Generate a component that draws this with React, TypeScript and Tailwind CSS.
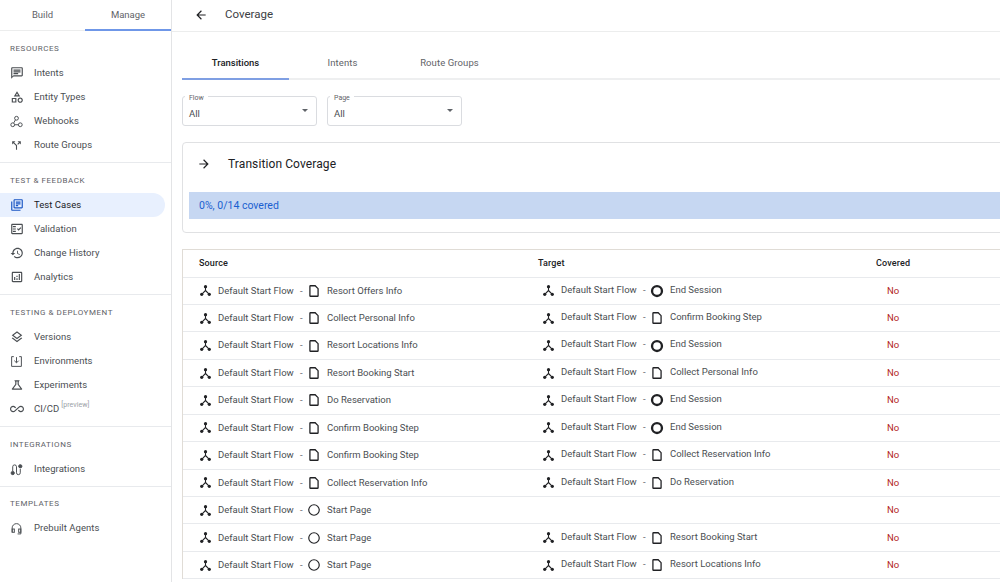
const paths = {
  intents: 'M20 2H4c-1.1 0-2 .9-2 2v18l4-4h14c1.1 0 2-.9 2-2V4c0-1.1-.9-2-2-2zm0 14H6l-2 2V4h16v12zM6 12h8v2H6zm0-3h12v2H6zm0-3h12v2H6z',
  entity: 'M12 2l-5.5 9h11L12 2zm0 3.84L13.93 9h-3.87L12 5.84zM17.5 13c-2.49 0-4.5 2.01-4.5 4.5s2.01 4.5 4.5 4.5 4.5-2.01 4.5-4.5-2.01-4.5-4.5-4.5zm0 7c-1.38 0-2.5-1.12-2.5-2.5s1.12-2.5 2.5-2.5 2.5 1.12 2.5 2.5-1.12 2.5-2.5 2.5zM3 21.5h8v-8H3v8zm2-6h4v4H5v-4z',
  route: 'M14 4l2.29 2.29-2.88 2.88 1.42 1.42 2.88-2.88L20 10V4zm-4 0H4v6l2.29-2.29 4.71 4.7V20h2v-8.41l-5.29-5.3z',
  tests: 'M4 6H2v14c0 1.1.9 2 2 2h14v-2H4V6zm16-4H8c-1.1 0-2 .9-2 2v12c0 1.1.9 2 2 2h12c1.1 0 2-.9 2-2V4c0-1.1-.9-2-2-2zm0 14H8V4h12v12zM10 9h8v2h-8zm0 3h4v2h-4zm0-6h8v2h-8z',
  validation: 'M20 3H4c-1.1 0-2 .9-2 2v14c0 1.1.9 2 2 2h16c1.1 0 2-.9 2-2V5c0-1.1-.9-2-2-2zm0 16H4V5h16v14zM19.41 10.42L17.99 9l-3.17 3.17-1.41-1.42L12 12.16 14.82 15zM5 7h5v2H5zM5 11h5v2H5zM5 15h5v2H5z',
  history: 'M13 3c-4.97 0-9 4.03-9 9H1l3.89 3.89.07.14L9 12H6c0-3.87 3.13-7 7-7s7 3.13 7 7-3.13 7-7 7c-1.93 0-3.68-.79-4.94-2.06l-1.42 1.42C8.27 19.99 10.51 21 13 21c4.97 0 9-4.03 9-9s-4.03-9-9-9zm-1 5v5l4.28 2.54.72-1.21-3.5-2.08V8H12z',
  analytics: 'M19 3H5c-1.1 0-2 .9-2 2v14c0 1.1.9 2 2 2h14c1.1 0 2-.9 2-2V5c0-1.1-.9-2-2-2zm0 16H5V5h14v14zM7 12h2v5H7zM15 7h2v10h-2zM11 14h2v3h-2zM11 10h2v2h-2z',
  versions: 'M11.99 18.54l-7.37-5.73L3 14.07l9 7 9-7-1.63-1.27-7.38 5.74zM12 16l7.36-5.73L21 9l-9-7-9 7 1.63 1.27L12 16zm0-11.47L17.74 9 12 13.47 6.26 9 12 4.53z',
  science: 'M13 11.33L18 18H6l5-6.67V6h2m2.96-2H8.04c-.42 0-.65.48-.39.81L9 6.5v4.17L3.2 18.4c-.49.66-.02 1.6.8 1.6h16c.82 0 1.29-.94.8-1.6L15 10.67V6.5l1.35-1.69c.26-.33.03-.81-.39-.81z',
  infinity: 'M18.6 6.62c-1.44 0-2.8.56-3.77 1.53L12 10.66 10.48 12h.01L7.8 14.39c-.64.64-1.49.99-2.4.99-1.87 0-3.39-1.51-3.39-3.38S3.53 8.62 5.4 8.62c.91 0 1.76.35 2.44 1.03l1.13 1 1.51-1.34L9.22 8.2C8.2 7.18 6.84 6.62 5.4 6.62 2.42 6.62 0 9.04 0 12s2.42 5.38 5.4 5.38c1.44 0 2.8-.56 3.77-1.53l2.83-2.5.01.01L13.52 12h-.01l2.69-2.39c.64-.64 1.49-.99 2.4-.99 1.87 0 3.39 1.51 3.39 3.38s-1.52 3.38-3.39 3.38c-.9 0-1.76-.35-2.44-1.03l-1.14-1.01-1.51 1.34 1.27 1.12c1.02 1.01 2.37 1.57 3.82 1.57 2.98 0 5.4-2.41 5.4-5.38s-2.42-5.37-5.4-5.37z',
  back: 'M20 11H7.83l5.59-5.59L12 4l-8 8 8 8 1.41-1.41L7.83 13H20v-2z',
  forward: 'M4 11h12.17l-5.59-5.59L12 4l8 8-8 8-1.41-1.41L16.17 13H4v-2z',
}

function Icon({ d, className }: { d: string; className?: string }) {
  return (
    <svg viewBox="0 0 24 24" fill="currentColor" className={className}>
      <path d={d} />
    </svg>
  )
}

function WebhookIcon({ className }: { className?: string }) {
  return (
    <svg viewBox="0 0 24 24" fill="none" stroke="currentColor" strokeWidth="1.8" className={className}>
      <circle cx="12" cy="6" r="3.5" />
      <circle cx="5" cy="18" r="3.5" />
      <circle cx="19" cy="18" r="3.5" />
      <path d="M10 9l-3 5.5M8.5 18h7" />
    </svg>
  )
}

function InboxIcon({ className }: { className?: string }) {
  return (
    <svg viewBox="0 0 24 24" fill="none" stroke="currentColor" strokeWidth="1.8" className={className}>
      <path d="M7 3H3v18h18V3h-4" />
      <path d="M12 4v10M8 10.5l4 4 4-4" />
    </svg>
  )
}

function IntegrationsIcon({ className }: { className?: string }) {
  return (
    <svg viewBox="0 0 24 24" fill="none" stroke="currentColor" strokeWidth="1.8" className={className}>
      <path d="M5 15V7a3.5 3.5 0 0 1 7 0v11a3 3 0 0 0 7 0V11" />
      <circle cx="5" cy="18.5" r="3" fill="currentColor" />
      <circle cx="19" cy="6" r="3" fill="currentColor" />
    </svg>
  )
}

function HeadsetIcon({ className }: { className?: string }) {
  return (
    <svg viewBox="0 0 24 24" fill="none" stroke="currentColor" strokeWidth="1.8" className={className}>
      <path d="M4 19v-8a8 8 0 0 1 16 0v8" />
      <rect x="4" y="13" width="4" height="6" />
      <rect x="16" y="13" width="4" height="6" />
      <path d="M20 19v3h-6" />
    </svg>
  )
}

function FlowIcon() {
  return (
    <svg viewBox="0 0 24 24" fill="none" className="size-[13px] shrink-0 text-[#202124]">
      <path d="M12 6v6L5 19M12 12l7 7" stroke="currentColor" strokeWidth="2" />
      <circle cx="12" cy="5" r="3" fill="currentColor" />
      <circle cx="5" cy="19" r="3" fill="currentColor" />
      <circle cx="19" cy="19" r="3" fill="currentColor" />
    </svg>
  )
}

function PageIcon() {
  return (
    <svg viewBox="0 0 24 24" fill="none" stroke="currentColor" strokeWidth="2.2" className="size-[14px] shrink-0 text-[#202124]">
      <path d="M14 3H6a1 1 0 0 0-1 1v16a1 1 0 0 0 1 1h12a1 1 0 0 0 1-1V8z" />
    </svg>
  )
}

function NodeIcon({ kind }: { kind: 'page' | 'start' | 'end' }) {
  if (kind === 'page') return <PageIcon />
  return (
    <svg viewBox="0 0 24 24" fill="none" stroke="currentColor" strokeWidth={kind === 'end' ? 4 : 2} className="size-[14px] shrink-0 text-[#202124]">
      <circle cx="12" cy="12" r={kind === 'end' ? 8.5 : 9} />
    </svg>
  )
}

const sections = [
  {
    title: 'Resources',
    items: [
      { label: 'Intents', icon: <Icon d={paths.intents} className="size-[14px]" /> },
      { label: 'Entity Types', icon: <Icon d={paths.entity} className="size-[14px]" /> },
      { label: 'Webhooks', icon: <WebhookIcon className="size-[13px]" /> },
      { label: 'Route Groups', icon: <Icon d={paths.route} className="size-[13px]" /> },
    ],
  },
  {
    title: 'Test & Feedback',
    items: [
      { label: 'Test Cases', active: true, icon: <Icon d={paths.tests} className="size-[14px]" /> },
      { label: 'Validation', icon: <Icon d={paths.validation} className="size-[14px]" /> },
      { label: 'Change History', icon: <Icon d={paths.history} className="size-[14px]" /> },
      { label: 'Analytics', icon: <Icon d={paths.analytics} className="size-[14px]" /> },
    ],
  },
  {
    title: 'Testing & Deployment',
    items: [
      { label: 'Versions', icon: <Icon d={paths.versions} className="size-[14px]" /> },
      { label: 'Environments', icon: <InboxIcon className="size-[13px]" /> },
      { label: 'Experiments', icon: <Icon d={paths.science} className="size-[14px]" /> },
      { label: 'CI/CD', preview: true, icon: <Icon d={paths.infinity} className="size-[14px]" /> },
    ],
  },
  {
    title: 'Integrations',
    items: [{ label: 'Integrations', icon: <IntegrationsIcon className="size-[13px]" /> }],
  },
  {
    title: 'Templates',
    items: [{ label: 'Prebuilt Agents', icon: <HeadsetIcon className="size-[13px]" /> }],
  },
]

type Node = { name: string; kind: 'page' | 'start' | 'end' }

const rows: { source: Node; target?: Node }[] = [
  { source: { name: 'Resort Offers Info', kind: 'page' }, target: { name: 'End Session', kind: 'end' } },
  { source: { name: 'Collect Personal Info', kind: 'page' }, target: { name: 'Confirm Booking Step', kind: 'page' } },
  { source: { name: 'Resort Locations Info', kind: 'page' }, target: { name: 'End Session', kind: 'end' } },
  { source: { name: 'Resort Booking Start', kind: 'page' }, target: { name: 'Collect Personal Info', kind: 'page' } },
  { source: { name: 'Do Reservation', kind: 'page' }, target: { name: 'End Session', kind: 'end' } },
  { source: { name: 'Confirm Booking Step', kind: 'page' }, target: { name: 'End Session', kind: 'end' } },
  { source: { name: 'Confirm Booking Step', kind: 'page' }, target: { name: 'Collect Reservation Info', kind: 'page' } },
  { source: { name: 'Collect Reservation Info', kind: 'page' }, target: { name: 'Do Reservation', kind: 'page' } },
  { source: { name: 'Start Page', kind: 'start' } },
  { source: { name: 'Start Page', kind: 'start' }, target: { name: 'Resort Booking Start', kind: 'page' } },
  { source: { name: 'Start Page', kind: 'start' }, target: { name: 'Resort Locations Info', kind: 'page' } },
]

function Sidebar() {
  return (
    <aside className="w-[172px] shrink-0 border-r border-[#e3e4e6] bg-white">
      <div className="flex h-[31px] border-b border-[#eceded] text-[9.5px] text-[#5f6368]">
        <div className="flex w-[85px] items-center justify-center pt-px">Build</div>
        <div className="-mb-px flex w-[86px] items-center justify-center border-b-2 border-[#6f97e8] pt-px">Manage</div>
      </div>
      {sections.map((section) => (
        <div key={section.title} className="border-b border-[#e8eaed] pt-[10px] pb-[5px] last:border-b-0 last:pt-[9px]">
          <div className="flex h-4 items-center pl-2.5 text-[8px] tracking-[0.55px] text-[#5f6368] uppercase">{section.title}</div>
          <div className="mt-[4px] flex flex-col">
            {section.items.map((item) => (
              <div
                key={item.label}
                className={`flex h-6 w-[165px] items-center rounded-r-full pl-2.5 text-[9.5px] tracking-[0.05px] ${item.active ? 'bg-[#e8f0fe] text-[#202124]' : 'text-[#4a4e52]'}`}
              >
                <span className={`flex w-6 shrink-0 items-center ${item.active ? 'text-[#1a56c4]' : 'text-[#4a4e52]'}`}>{item.icon}</span>
                {item.label}
                {item.preview && <span className="mb-2 ml-0.5 text-[7px] text-[#9aa0a6]">[preview]</span>}
              </div>
            ))}
          </div>
        </div>
      ))}
    </aside>
  )
}

function Select({ label }: { label: string }) {
  return (
    <div className="relative flex h-[30px] w-[135px] items-end justify-between rounded-[3px] border border-[#dadce0] px-[6px] pb-[4px] text-[9.5px] text-[#4a4e52]">
      <span className="absolute -top-[3px] left-[2px] bg-white px-1 text-[7px] leading-[9px] text-[#5f6368]">{label}</span>
      All
      <span className="mr-[2px] mb-[9px] size-0 border-x-[3.5px] border-t-[3.5px] border-x-transparent border-t-[#5f6368]" />
    </div>
  )
}

function Cell({ node, raised }: { node: Node; raised?: boolean }) {
  return (
    <div className={`flex items-center text-[9.5px] text-[#4a4e52] ${raised ? '-translate-y-px pl-[4px]' : ''}`}>
      <span className={raised ? 'translate-y-px' : ''}>
        <FlowIcon />
      </span>
      <span className="ml-[6px] w-[77px] whitespace-nowrap">Default Start Flow</span>
      <span className="ml-[5px] w-[7px] text-[#5f6368]">-</span>
      <span className={raised ? 'translate-y-px' : ''}>
        <NodeIcon kind={node.kind} />
      </span>
      <span className="ml-[6px] whitespace-nowrap">{node.name}</span>
    </div>
  )
}

export default function App() {
  return (
    <div className="flex h-[582px] w-[1000px] overflow-hidden bg-white font-['Roboto',sans-serif]">
      <Sidebar />
      <main className="min-w-0 flex-1">
        <header className="flex h-[32px] items-center border-b border-[#eceded] pb-[2px] pl-[22px] text-[11.5px] text-[#3c4043]">
          <Icon d={paths.back} className="size-[14px] text-[#202124]" />
          <span className="ml-[17px]">Coverage</span>
        </header>
        <div className="w-[900px] pl-[10px]">
          <div className="mt-[16px] flex h-[32px] border-b-2 border-[#eeeff0] pt-px text-[9.5px] tracking-[0.1px] text-[#5f6368]">
            <div className="-mb-0.5 flex w-[107px] items-center justify-center border-b-2 border-[#7f9fe3] font-medium tracking-normal text-[#202124]">Transitions</div>
            <div className="flex w-[107px] items-center justify-center">Intents</div>
            <div className="flex w-[107px] items-center justify-center">Route Groups</div>
          </div>
          <div className="mt-[16px] flex gap-[10px]">
            <Select label="Flow" />
            <Select label="Page" />
          </div>
          <section className="mt-[16px] h-[91px] rounded-[4px] border border-[#e0e1e3] px-[6px]">
            <div className="flex h-[42px] items-center pl-[8px] text-[12px] text-[#202124]">
              <Icon d={paths.forward} className="size-[14px]" />
              <span className="ml-[17px] tracking-[0.1px]">Transition Coverage</span>
            </div>
            <div className="mt-[7px] flex h-[27px] items-center bg-[#c6d7f2] pl-[10px] text-[10.5px] text-[#1a5fd0]">0%, 0/14 covered</div>
          </section>
          <section className="mt-[16px] border-t border-l border-[#e0dcd6]">
            <div className="grid h-[27.5px] grid-cols-[339px_338px_1fr] items-center border-b border-[#e8eaed] pl-[16px] text-[9px] font-medium tracking-[0.15px] text-[#202124]">
              <div>Source</div>
              <div>Target</div>
              <div>Covered</div>
            </div>
            {rows.map((row, i) => (
              <div key={i} className="grid h-[27.45px] grid-cols-[339px_338px_1fr] items-center border-b border-[#e8eaed] pl-[16px]">
                <Cell node={row.source} />
                {row.target ? <Cell node={row.target} raised /> : <div />}
                <div className="pl-[11px] text-[9.5px] text-[#b3261e]">No</div>
              </div>
            ))}
          </section>
        </div>
      </main>
    </div>
  )
}
